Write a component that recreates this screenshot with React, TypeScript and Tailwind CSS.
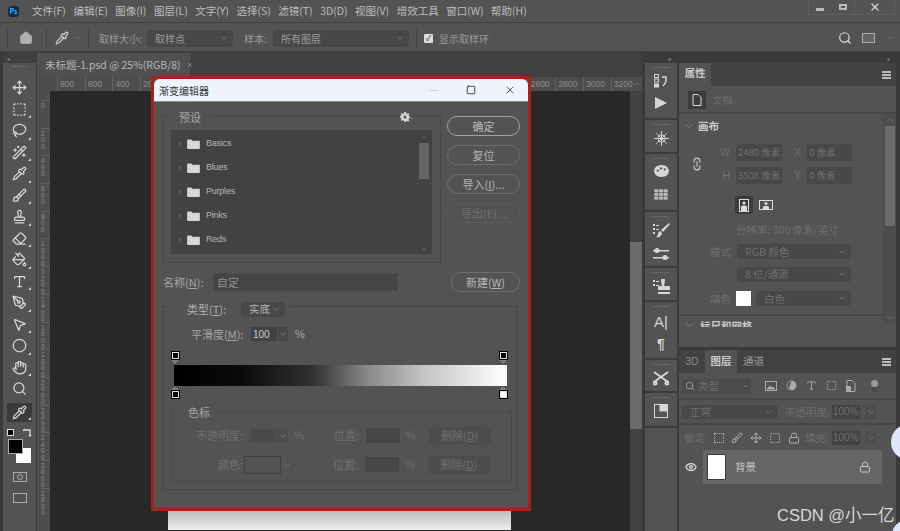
import {
  Brush,
  ChevronDown,
  ChevronRight,
  ChevronUp,
  Circle,
  Eraser,
  Eye,
  Hand,
  House,
  Lasso,
  Link2,
  Lock,
  MousePointer2,
  Move,
  PaintBucket,
  PenTool,
  Pipette,
  Search,
  Square,
  SquareDashed,
  Stamp,
  Type,
  WandSparkles,
  X,
} from 'lucide-react';
import type { ReactNode } from 'react';

const menus = ['文件(F)', '编辑(E)', '图像(I)', '图层(L)', '文字(Y)', '选择(S)', '滤镜(T)', '3D(D)', '视图(V)', '增效工具', '窗口(W)', '帮助(H)'];
// ticks behind the dialog have no visible label
const rulerTop = ['800', '600', '400', '200', '', '', '', '', '', '', '', '', '', '', '', '', '', '2600', '2800', '3000', '3200'];
const rulerLeft = ['0', '200', '400', '600', '800', '1000', '1200', '1400', '1600', '1800', '2000', '2200', '2400', '2600', '2800', '3000'];
const folders = ['Basics', 'Blues', 'Purples', 'Pinks', 'Reds'];

const tools = [Move, SquareDashed, Lasso, WandSparkles, Pipette, Brush, Stamp, Eraser, PaintBucket, Type, PenTool, MousePointer2, Circle, Hand, Search];

function Corner() {
  return <div className="absolute bottom-[2px] right-[1px] h-0 w-0 border-b-[3px] border-l-[3px] border-b-[#ccc] border-l-transparent" />;
}

function Caret({ className = '' }: { className?: string }) {
  return <ChevronDown className={'h-2.5 w-2.5 text-[#8a8a8a] ' + className} strokeWidth={1.5} />;
}

function Select({ className, text, tone = 'text-[#9a9a9a]' }: { className: string; text: string; tone?: string }) {
  return (
    <div className={'flex items-center justify-between rounded-sm bg-[#484848] pl-2 pr-1 ' + tone + ' ' + className}>
      <span>{text}</span>
      <Caret />
    </div>
  );
}

function DialogButton({ children, className }: { children: ReactNode; className: string }) {
  return <div className={'flex items-center justify-center rounded-full border text-[11px] ' + className}>{children}</div>;
}

function DockGroup({ children, className, gap = '' }: { children: ReactNode; className: string; gap?: string }) {
  return (
    <div className={'flex shrink-0 flex-col items-center border-b-2 border-[#3c3c3c] pt-1 text-[#d6d6d6] ' + className}>
      <div className="mx-auto mb-1 h-[3px] w-4 border-t border-dotted border-[#777]" />
      <div className={'flex flex-col items-center ' + gap}>{children}</div>
    </div>
  );
}

function Stop({ kind, fill }: { kind: 'top' | 'bottom'; fill: string }) {
  const box = <div className={'h-[7px] w-[7px] shrink-0 border border-[#e0e0e0] outline outline-1 outline-black ' + fill} />;
  const tip = kind === 'top'
    ? <div className="h-0 w-0 border-x-[4px] border-t-[4px] border-x-transparent border-t-[#7d7d7d]" />
    : <div className="h-0 w-0 border-x-[4px] border-b-[4px] border-x-transparent border-b-[#7d7d7d]" />;
  return (
    <div className="flex w-[8px] flex-col items-center gap-px">
      {kind === 'top' ? box : tip}
      {kind === 'top' ? tip : box}
    </div>
  );
}

function StopRow({ y, children }: { y: string; children: ReactNode }) {
  return <div className={'flex items-center text-[11px] text-[#6f6f6f] ' + y}>{children}</div>;
}

function GradientDialog() {
  return (
    <div className="absolute left-[151px] top-[76px] z-10 flex h-[435px] w-[380px] flex-col border-[3px] border-[#a6231b] bg-[#535353] text-[11px] text-[#ababab]">
      <div className="flex h-[23px] shrink-0 items-center justify-between rounded-t-md border-b border-[#8c8c8c] bg-[#eef3fb] pl-[5px] pr-[12px] text-[#333]">
        <span className="text-[10px]">渐变编辑器</span>
        <div className="flex items-center gap-[28px] text-[#222]">
          <div className="h-px w-2 bg-[#c8ccd2]" />
          <Square className="h-[10px] w-[10px]" strokeWidth={2} />
          <X className="h-3 w-3" strokeWidth={1.5} />
        </div>
      </div>

      <div className="relative flex pl-[8px] pt-[14px]">
        <div className="relative h-[147px] w-[279px] border border-[#484848] px-[8px] pt-[13px]">
          <span className="absolute -top-[8px] left-[8px] bg-[#535353] px-2 text-[#a6a6a6]">预设</span>
          <div className="absolute -top-[5px] right-[27px] flex items-center gap-px bg-[#535353] text-[#d0d0d0]">
            <svg viewBox="0 0 12 12" className="h-2.5 w-2.5" fill="currentColor" fillRule="evenodd">
              <path d="M5 0h2l.3 1.6 1.2.5 1.4-.9 1.3 1.3-.9 1.4.5 1.2L12 5v2l-1.2.9-.5 1.2.9 1.4-1.3 1.3-1.4-.9-1.2.5L7 12H5l-.3-1.6-1.2-.5-1.4.9-1.3-1.3.9-1.4-.5-1.2L0 7V5l1.2-.9.5-1.2-.9-1.4L2.1 1.200l1.4.9 1.2-.5zM6 4.200a1.800 1.800 0 1 0 0 3.600 1.800 1.800 0 0 0 0-3.600z" />
            </svg>
            <span className="text-[7px]">-</span>
          </div>
          <div className="flex h-[124px] bg-[#424242] pr-[3px]">
            <div className="flex flex-1 flex-col pl-[4px] pt-[2px]">
              {folders.map((name) => (
                <div key={name} className="flex h-[24px] items-center">
                  <ChevronRight className="h-2.5 w-2.5 text-[#8d8d8d]" strokeWidth={1.5} />
                  <svg viewBox="0 0 14 11" className="ml-[2px] h-[10px] w-[13px]" fill="#d6d6d6">
                    <path d="M0 1.500Q0 .5 1 .5h3.500l1 1.500H13q1 0 1 1v7q0 1-1 1H1q-1 0-1-1z" />
                  </svg>
                  <span className="ml-[6px] font-['Liberation_Sans'] text-[9px] tracking-tight text-[#b5b5b5]">{name}</span>
                </div>
              ))}
            </div>
            <div className="flex w-[11px] flex-col items-center">
              <ChevronUp className="h-[13px] w-2.5 text-[#777]" strokeWidth={1.5} />
              <div className="h-[36px] w-[10px] bg-[#666]" />
              <div className="flex-1" />
              <Caret />
            </div>
          </div>
        </div>
        <div className="ml-[6px] flex flex-col gap-[9px]">
          <DialogButton className="h-[20px] w-[73px] border-[#a5a5a5] text-[#bdbdbd]">确定</DialogButton>
          <DialogButton className="h-[20px] w-[73px] border-[#6e6e6e] text-[#b5b5b5]">复位</DialogButton>
          <DialogButton className="h-[20px] w-[73px] border-[#6e6e6e] text-[#b5b5b5]">导入(<u>I</u>)...</DialogButton>
          <DialogButton className="h-[20px] w-[73px] border-[#5c5c5c] text-[#6f6f6f]">导出(E)...</DialogButton>
        </div>
      </div>

      <div className="flex items-center pl-[9px] pt-[9px]">
        <span className="w-[50px] text-[#a6a6a6]">名称(<u>N</u>):</span>
        <div className="flex h-[18px] w-[185px] items-center border border-[#4a4a4a] bg-[#454545] pl-[3px] text-[#909090]">自定</div>
        <DialogButton className="ml-[53px] h-[20px] w-[69px] border-[#6e6e6e] text-[#b5b5b5]">新建(<u>W</u>)</DialogButton>
      </div>

      <div className="relative ml-[8px] mt-[14px] h-[184px] w-[356px] border border-[#484848]">
        <div className="absolute -top-[6px] left-[8px] flex items-center bg-[#535353] pl-[16px] pr-1">
          <span className="w-[54px] text-[#b0b0b0]">类型(<u>T</u>):</span>
          <Select className="h-[15px] w-[44px] text-[10.5px]" text="实底" tone="text-[#b5b5b5]" />
        </div>

        <div className="flex items-center pl-[28px] pt-[19px]">
          <span className="w-[60px] leading-[13px] text-[#a6a6a6]">平滑度(<u>M</u>):</span>
          <div className="flex h-[14px] w-[26px] items-center bg-[#424242] pl-[2px] font-['Liberation_Sans'] text-[10px] text-[#d0d0d0]">100</div>
          <div className="ml-px flex h-[14px] w-[10px] items-center justify-center bg-[#484848]"><Caret /></div>
          <span className="ml-[7px] font-['Liberation_Sans'] text-[#a6a6a6]">%</span>
        </div>

        <div className="flex justify-between pl-[8px] pr-[10px] pt-[9px]"><Stop kind="top" fill="bg-black" /><Stop kind="top" fill="bg-black" /></div>
        <div className="ml-[11px] mt-px h-[21px] w-[333px] bg-[linear-gradient(90deg,#000_0%,#0a0a0a_20%,#333_42%,#888_58%,#c4c4c4_75%,#fff_100%)]" />
        <div className="flex justify-between pl-[8px] pr-[10px]"><Stop kind="bottom" fill="bg-black" /><Stop kind="bottom" fill="bg-white" /></div>

        <div className="relative ml-[8px] mt-[13px] h-[71px] w-[341px] border border-[#4a4a4a]">
          <span className="absolute -top-[8px] left-[10px] bg-[#535353] px-[6px] text-[#a6a6a6]">色标</span>
          <StopRow y="pt-[15px]">
            <span className="w-[71px] text-right">不透明度:</span>
            <div className="ml-[7px] h-[13px] w-[26px] bg-[#4a4a4a]" />
            <div className="ml-px flex h-[13px] w-[11px] items-center justify-center bg-[#4d4d4d]"><Caret /></div>
            <span className="ml-[6px] font-['Liberation_Sans']">%</span>
            <span className="ml-[30px] w-[32px]">位置:</span>
            <div className="h-[15px] w-[34px] bg-[#474747]" />
            <span className="ml-[6px] font-['Liberation_Sans']">%</span>
            <div className="ml-[13px] flex h-[18px] w-[62px] items-center justify-center bg-[#4d4d4d]">删除(<u>D</u>)</div>
          </StopRow>
          <StopRow y="pt-[11px]">
            <span className="w-[71px] text-right">颜色:</span>
            <div className="ml-px h-[18px] w-[37px] border border-[#3e3e3e]" />
            <Caret className="ml-px" />
            <span className="ml-[41px] w-[32px]">位置:</span>
            <div className="h-[15px] w-[34px] bg-[#474747]" />
            <span className="ml-[6px] font-['Liberation_Sans']">%</span>
            <div className="ml-[13px] flex h-[18px] w-[62px] items-center justify-center bg-[#4d4d4d]">删除(<u>D</u>)</div>
          </StopRow>
        </div>
      </div>
    </div>
  );
}

function PropertyField({ label, value, width }: { label: string; value: string; width: string }) {
  return (
    <div className="flex items-center">
      <span className="w-[12px] text-right font-['Liberation_Sans'] text-[#6e6e6e]">{label}</span>
      <div className={'ml-[6px] flex h-[17px] items-center overflow-hidden whitespace-nowrap bg-[#484848] pl-[2px] text-[9.5px] text-[#6e6e6e] ' + width}>{value}</div>
    </div>
  );
}

function Menu() {
  return (
    <div className="flex flex-col justify-center gap-px">
      <div className="h-[2px] w-[9px] bg-[#bbb]" />
      <div className="h-[2px] w-[9px] bg-[#bbb]" />
      <div className="h-[2px] w-[9px] bg-[#bbb]" />
    </div>
  );
}

function PropertiesPanel() {
  return (
    <div className="flex h-[284px] shrink-0 flex-col bg-[#535353] text-[10.5px]">
      <div className="flex h-[23px] shrink-0 items-stretch justify-between bg-[#424242] pr-[5px]">
        <div className="flex w-[32px] items-center justify-center bg-[#535353] pb-[3px] font-bold text-[#c9c9c9]">属性</div>
        <Menu />
      </div>
      <div className="flex h-[28px] shrink-0 items-center border-b-2 border-[#474747] pl-[9px] pt-px">
        <div className="flex h-[18px] w-[18px] items-center justify-center bg-[#3c3c3c]">
          <svg viewBox="0 0 10 12" className="h-3 w-2.5" fill="none" stroke="#ddd"><path d="M1 .5h5l3 3v8H1z" /></svg>
        </div>
        <span className="ml-[6px] text-[#6e6e6e]">文档</span>
      </div>
      <div className="flex min-h-0 flex-1">
        <div className="flex-1 overflow-hidden">
          <div className="flex h-[24px] items-center pl-[4px] font-bold text-[#c9c9c9]">
            <ChevronDown className="h-3 w-3 text-[#8d8d8d]" strokeWidth={1.5} />
            <span className="ml-[3px]">画布</span>
          </div>
          <div className="flex items-center pl-[11px] pt-[6px]">
            <Link2 className="h-3.5 w-3.5 rotate-90 text-[#c9c9c9]" />
            <div className="ml-[14px] flex flex-col gap-[6px]">
              <div className="flex gap-[7px]">
                <PropertyField label="W" value="2480 像素" width="w-[46px]" />
                <PropertyField label="X" value="0 像素" width="w-[45px]" />
              </div>
              <div className="flex gap-[7px]">
                <PropertyField label="H" value="3508 像素" width="w-[46px]" />
                <PropertyField label="Y" value="0 像素" width="w-[45px]" />
              </div>
            </div>
          </div>
          <div className="flex items-center gap-[6px] pl-[56px] pt-[12px]">
            <div className="flex h-[18px] w-[18px] items-center justify-center bg-[#3c3c3c]">
              <svg viewBox="0 0 10 13" className="h-[13px] w-[10px]" fill="none" stroke="#ddd"><rect x=".5" y=".5" width="9" height="12" /><circle cx="5" cy="4" r="1.6" fill="#ddd" stroke="none" /><path d="M2 12V8q0-1.500 1.500-1.500h3Q8 6.500 8 8v4z" fill="#ddd" stroke="none" /></svg>
            </div>
            <svg viewBox="0 0 14 10" className="h-[10px] w-[14px]" fill="none" stroke="#ddd"><rect x=".5" y=".5" width="13" height="9" /><circle cx="7" cy="3.500" r="1.500" fill="#ddd" stroke="none" /><path d="M4 9V7.500Q4 6 5.500 6h3Q10 6 10 7.500V9z" fill="#ddd" stroke="none" /></svg>
          </div>
          <div className="pl-[57px] pt-[8px] text-[#6e6e6e]">分辨率: 300 像素/英寸</div>
          <div className="flex items-center pl-[31px] pt-[6px] text-[#6e6e6e]">
            <span className="w-[27px]">模式</span>
            <Select className="h-[15px] w-[114px]" text="RGB 颜色" tone="text-[#6e6e6e]" />
          </div>
          <div className="pl-[58px] pt-[7px]">
            <Select className="h-[15px] w-[114px]" text="8 位/通道" tone="text-[#6e6e6e]" />
          </div>
          <div className="flex items-center pl-[31px] pt-[9px] text-[#6e6e6e]">
            <span className="w-[26px]">填色</span>
            <div className="h-[15px] w-[15px] bg-white" />
            <Select className="ml-[5px] h-[15px] w-[95px]" text="白色" tone="text-[#6e6e6e]" />
          </div>
          <div className="mt-[8px] flex h-[13px] items-start overflow-hidden border-t-2 border-[#474747] pl-[4px] pt-[3px] font-bold text-[#c9c9c9]">
            <ChevronDown className="h-3 w-3 text-[#8d8d8d]" strokeWidth={1.5} />
            <span className="ml-[5px] leading-[14px]">标尺和网格</span>
          </div>
        </div>
        <div className="flex h-[209px] w-[13px] flex-col items-center bg-[#4d4d4d]">
          <ChevronUp className="h-3 w-3 text-[#777]" strokeWidth={1.5} />
          <div className="h-[100px] w-[10px] bg-[#6b6b6b]" />
          <div className="flex-1" />
          <Caret />
        </div>
      </div>
    </div>
  );
}

function LayersPanel() {
  return (
    <div className="flex flex-1 flex-col bg-[#535353] text-[10.5px] text-[#6e6e6e]">
      <div className="flex h-[23px] shrink-0 items-stretch bg-[#424242] pr-[5px]">
        <div className="flex w-[26px] items-center justify-center font-['Liberation_Sans'] text-[#888]">3D</div>
        <div className="flex w-[32px] items-center justify-center bg-[#535353] pb-px font-bold text-[#c9c9c9]">图层</div>
        <div className="flex w-[33px] items-center justify-center pb-px text-[#9a9a9a]">通道</div>
        <div className="flex-1" />
        <Menu />
      </div>
      <div className="flex h-[27px] shrink-0 items-center border-b-2 border-[#474747] pl-[3px] text-[#aaa]">
        <div className="flex h-[14px] w-[69px] items-center bg-[#4b4b4b] pl-[3px] text-[#6e6e6e]">
          <Search className="h-2.5 w-2.5 text-[#aaa]" />
          <span className="ml-[3px] flex-1">类型</span>
          <Caret />
        </div>
        <div className="ml-[14px] flex items-center gap-[9px]">
          <svg viewBox="0 0 12 10" className="h-[10px] w-[12px]" fill="none" stroke="currentColor"><rect x=".5" y=".5" width="11" height="9" /><path d="M2 8l3-3 2 2 1-1 2 2z" fill="currentColor" /></svg>
          <svg viewBox="0 0 12 12" className="h-[11px] w-[11px]"><circle cx="6" cy="6" r="5" fill="none" stroke="currentColor" /><path d="M6 1a5 5 0 0 1 0 10L3 9z" fill="currentColor" /></svg>
          <Type className="h-[11px] w-[11px]" />
          <SquareDashed className="h-[11px] w-[11px]" />
          <svg viewBox="0 0 10 12" className="h-[12px] w-[10px]" fill="currentColor"><path d="M1 .5h5l3 3v8H1z" fill="none" stroke="currentColor" /><rect x="0" y="6" width="5" height="6" /></svg>
        </div>
        <div className="ml-[15px] flex flex-col items-center">
          <div className="h-[7px] w-[7px] rounded-full bg-[#999]" />
          <div className="h-[5px] w-[5px] rounded-full bg-[#474747]" />
        </div>
      </div>
      <div className="flex h-[25px] shrink-0 items-center border-b-2 border-[#474747] pl-[3px]">
        <Select className="h-[14px] w-[96px]" text="正常" tone="text-[#6e6e6e]" />
        <span className="ml-[7px] w-[47px]">不透明度:</span>
        <div className="flex h-[14px] w-[28px] items-center bg-[#434343] pl-px font-['Liberation_Sans'] text-[10px]">100%</div>
        <div className="ml-[5px] flex h-[14px] w-[11px] items-center justify-center bg-[#4d4d4d]"><Caret /></div>
      </div>
      <div className="flex h-[25px] shrink-0 items-center pl-[5px]">
        <span className="w-[30px]">锁定:</span>
        <div className="flex items-center gap-[7px] text-[#b0b0b0]">
          <div className="h-[10px] w-[10px] border border-dotted border-[#b0b0b0]" />
          <Brush className="h-3 w-3" />
          <Move className="h-3 w-3" />
          <SquareDashed className="h-3 w-3" />
          <Lock className="h-3 w-3" />
        </div>
        <span className="ml-[5px] w-[27px]">填充:</span>
        <div className="flex h-[14px] w-[28px] items-center bg-[#434343] pl-px font-['Liberation_Sans'] text-[10px]">100%</div>
        <div className="ml-[5px] flex h-[14px] w-[11px] items-center justify-center bg-[#4d4d4d]"><Caret /></div>
      </div>
      <div className="flex h-[34px] shrink-0 items-center pl-[6px]">
        <Eye className="h-3 w-3 text-[#ddd]" strokeWidth={2.5} />
        <div className="ml-[6px] flex h-full w-[179px] items-center bg-[#666] pl-[4px] text-[#c9c9c9]">
          <div className="h-[26px] w-[19px] border border-[#3c3c3c] bg-white" />
          <span className="ml-[9px] flex-1">背景</span>
          <Lock className="mr-[11px] h-3 w-3 text-[#c9c9c9]" />
        </div>
      </div>
    </div>
  );
}

function Dock() {
  return (
    <div className="flex w-[32px] shrink-0 flex-col bg-[#535353]">
      <DockGroup className="h-[57px]" gap="gap-[9px]">
        <svg viewBox="0 0 14 14" className="h-[14px] w-[14px]" fill="none" stroke="currentColor"><rect x=".5" y=".5" width="4" height="3" /><rect x=".5" y="5" width="4" height="3" /><rect x=".5" y="10" width="4" height="3" fill="currentColor" /><path d="M8 3h4q1 5-3 9" strokeWidth="1.5" /></svg>
        <svg viewBox="0 0 12 12" className="h-[12px] w-[12px]" fill="currentColor"><path d="M0 0l12 6-12 6z" /></svg>
      </DockGroup>
      <DockGroup className="h-[34px]">
        <svg viewBox="0 0 16 16" className="h-[15px] w-[15px]" fill="none" stroke="currentColor"><circle cx="8" cy="8" r="4" /><circle cx="8" cy="8" r="1.5" fill="currentColor" /><path d="M8 0v16M0 8h16M2.500 2.500l11 11M13.500 2.500l-11 11" /></svg>
      </DockGroup>
      <DockGroup className="h-[58px]" gap="gap-[12px]">
        <svg viewBox="0 0 16 13" className="h-[12px] w-[15px]" fill="currentColor" fillRule="evenodd"><path d="M8 0c5 0 8 3 8 6.500S13 13 8 13 0 10 0 6.500 3 0 8 0zM4 5a1.200 1.200 0 1 0 0 2.400A1.200 1.200 0 0 0 4 5zm3.500-2.500a1.200 1.200 0 1 0 0 2.400 1.200 1.200 0 0 0 0-2.400zm4 1a1.200 1.200 0 1 0 0 2.400 1.200 1.200 0 0 0 0-2.400z" /></svg>
        <svg viewBox="0 0 14 11" className="h-[11px] w-[14px]" fill="#bbb" stroke="#333" strokeWidth=".5"><path d="M0 0h14v11H0zM0 3.600h14M0 7.300h14M4.600 0v11M9.300 0v11" /></svg>
      </DockGroup>
      <DockGroup className="h-[56px]" gap="gap-[10px]">
        <svg viewBox="0 0 17 15" className="h-[15px] w-[17px]" fill="currentColor"><path d="M0 1h2v2H0zM0 5h2v2H0zM0 9h2v2H0zM3 2h3v1H3zM3 6h3v1H3z" /><path d="M16 0l1 1-7 8-2-2zM7 8l2 2q-1 5-6 4 2-1 2-3t2-3z" /></svg>
        <svg viewBox="0 0 16 12" className="h-[12px] w-[16px]" fill="currentColor"><rect y="2" width="16" height="1.5" /><circle cx="4" cy="2.500" r="2.500" /><rect y="9" width="16" height="1.5" /><circle cx="12" cy="9.500" r="2.500" /></svg>
      </DockGroup>
      <DockGroup className="h-[34px]">
        <svg viewBox="0 0 17 16" className="h-[16px] w-[17px]" fill="currentColor"><path d="M0 1h2v2H0zM0 5h2v2H0zM3 2h3v1H3zM3 6h3v1H3z" /><path d="M8 0h4v2l-1 5h5q1 0 1 1v3H5V8q0-1 1-1h3L8 2zM5 13h12v2H5z" /></svg>
      </DockGroup>
      <DockGroup className="h-[58px]" gap="gap-[5px]">
        <span className="font-['Liberation_Sans'] text-[15px] leading-[18px]">A|</span>
        <span className="font-['Liberation_Sans'] text-[14px] font-bold leading-[16px]">¶</span>
      </DockGroup>
      <DockGroup className="h-[33px]">
        <svg viewBox="0 0 16 15" className="h-[15px] w-[16px]" fill="none" stroke="currentColor" strokeWidth="2"><path d="M1 1l14 10M15 1L1 11" /><circle cx="2" cy="12" r="1.500" /><circle cx="14" cy="12" r="1.500" /></svg>
      </DockGroup>
      <DockGroup className="h-[35px]">
        <svg viewBox="0 0 14 14" className="h-[14px] w-[14px]" fill="none" stroke="currentColor"><rect x=".5" y=".5" width="13" height="13" /><rect x="6" y="1" width="7" height="6" fill="currentColor" /></svg>
      </DockGroup>
    </div>
  );
}

export default function App() {
  return (
    <div className="relative h-[531px] w-[900px] overflow-hidden bg-[#535353] font-['Noto_Sans_CJK_SC','Liberation_Sans',sans-serif] text-[#bdbdbd]">
      <div className="flex h-[23px] items-center border-b border-[#3f3f3f] pl-[8px] text-[10.5px]">
        <div className="flex h-[11px] w-[11px] items-center justify-center rounded-sm bg-[#0b2c4f] text-[7px] font-bold text-[#4fb0f5]">Ps</div>
        <div className="ml-[13px] flex gap-[7.5px]">
          {menus.map((item) => <span key={item}>{item}</span>)}
        </div>
        <div className="ml-auto mr-[5px] flex h-[15px] items-center self-start border-x border-b border-[#5f5f5f] text-[#c9c9c9]">
          <div className="flex h-full w-[22px] items-center justify-center"><div className="mt-1 h-[3px] w-2 bg-[#bbb]" /></div>
          <div className="flex h-full w-[23px] items-center justify-center"><div className="h-[6px] w-[8px] border-2 border-[#bbb]" /></div>
          <div className="flex h-full w-[40px] items-center justify-center border-l border-[#5f5f5f]"><X className="h-3 w-3" strokeWidth={3} /></div>
        </div>
      </div>

      <div className="flex h-[30px] items-center border-b-2 border-[#3f3f3f] pt-[2px] text-[10px] text-[#9a9a9a]">
        <div className="ml-[7px] h-[20px] w-px bg-[#444]" />
        <House className="ml-[11px] h-3.5 w-3.5 text-[#b0b0b0]" fill="currentColor" />
        <div className="ml-[13px] h-[20px] w-px bg-[#444]" />
        <Pipette className="ml-[8px] h-3.5 w-3.5 text-[#ccc]" />
        <Caret className="ml-[4px]" />
        <div className="ml-[5px] h-[20px] w-px bg-[#444]" />
        <span className="ml-[10px] w-[48px]">取样大小:</span>
        <Select className="h-[17px] w-[86px]" text="取样点" />
        <span className="ml-[11px] w-[29px]">样本:</span>
        <Select className="h-[17px] w-[136px]" text="所有图层" />
        <div className="ml-[7px] h-[20px] w-px bg-[#444]" />
        <div className="ml-[7px] flex h-[9px] w-[9px] items-center justify-center rounded-[1px] bg-[#ddd] text-[8px] leading-none text-[#222]">✓</div>
        <span className="ml-[6px]">显示取样环</span>
        <div className="ml-auto mr-[5px] flex items-center gap-[10px]">
          <Search className="h-3.5 w-3.5 text-[#ddd]" />
          <div className="h-[10px] w-[13px] border border-[#aaa] bg-[#666]" />
          <Caret />
        </div>
      </div>

      <div className="flex h-[478px] bg-[#3a3a3a]">
        <div className="ml-[3px] flex w-[33px] shrink-0 flex-col items-center bg-[#535353]">
          <div className="flex h-[10px] w-full items-center bg-[#3f3f3f] pl-[4px] text-[7px] leading-none text-[#aaa]">»</div>
          <div className="mt-[3px] h-[3px] w-4 border-t border-dotted border-[#777]" />
          <div className="flex flex-col items-center pt-[8px] text-[#d8d8d8]">
            {tools.map((Icon, i) => (
              <div key={i} className="relative flex h-[21.5px] w-[25px] items-center justify-center">
                <Icon className="h-[15px] w-[15px]" />
                {i !== 0 && i !== 14 && <Corner />}
              </div>
            ))}
            <div className="relative mt-[3px] flex h-[19px] w-[25px] items-center justify-center bg-[#3a3a3a]">
              <Pipette className="h-[15px] w-[15px]" />
              <Corner />
            </div>
          </div>
          <div className="mt-[6px] flex w-[25px] items-center justify-between">
            <div className="h-[7px] w-[7px] border border-[#ddd] bg-black" />
            <svg viewBox="0 0 9 9" className="h-[9px] w-[9px]" fill="none" stroke="#ddd" strokeWidth="1.3"><path d="M1 2h6v6M0 3l1-1 1-1M6 7l1 1 1-1" /></svg>
          </div>
          <div className="mt-[2px] w-[24px]">
            <div className="relative z-[1] h-[15px] w-[15px] border border-[#aaa] bg-black" />
            <div className="-mt-[6px] ml-[8px] h-[15px] w-[15px] bg-white" />
          </div>
          <div className="mt-[9px] flex h-[10px] w-[14px] items-center justify-center border border-[#aaa]">
            <div className="h-[6px] w-[6px] rounded-full border border-[#aaa]" />
          </div>
          <div className="mt-[11px] h-[10px] w-[14px] border border-[#aaa]" />
        </div>
        <div className="w-px shrink-0 bg-[#3a3a3a]" />

        <div className="relative flex w-[605px] shrink-0 flex-col">
          <div className="flex h-[24px] shrink-0 bg-[#404040]">
            <div className="flex w-[153px] items-center bg-[#505050] pl-[8px] text-[10.5px] text-[#b5b5b5]">
              <span className="whitespace-nowrap">未标题-1.psd @ 25%(RGB/8)</span>
              <X className="ml-[5px] h-2 w-2 shrink-0 text-[#999]" />
            </div>
          </div>
          <div className="flex h-[14px] shrink-0 items-center overflow-hidden bg-[#4d4d4d] pl-[20px] font-['Liberation_Sans'] text-[8.5px] text-[#8e8e8e]">
            {rulerTop.map((tick, i) => (
              <span key={i} className="h-[14px] w-[27.7px] shrink-0 border-l border-[#626262] pl-[2px] leading-[14px]">{tick}</span>
            ))}
          </div>
          <ChevronUp className="absolute right-0 top-[26px] h-2.5 w-2.5 text-[#8a8a8a]" strokeWidth={1.5} />
          <div className="flex min-h-0 flex-1">
            <div className="flex w-[13px] shrink-0 flex-col overflow-hidden bg-[#4d4d4d] pl-[4px] pt-[9px] font-['Liberation_Sans'] text-[6.5px] leading-[6.5px] text-[#8e8e8e]">
              {rulerLeft.slice(0, 15).map((tick, i) => (
                <div key={i} className="h-[27.7px] shrink-0 border-t border-[#626262] pt-[2px]">
                  {tick.split('').map((d, j) => <div key={j}>{d}</div>)}
                </div>
              ))}
            </div>
            <div className="relative flex-1 overflow-hidden bg-[#282828]">
              <div className="absolute left-[118px] top-[398px] h-[41px] w-[343px] bg-gradient-to-b from-[#888888] to-[#eeeeee]" />
            </div>
            <div className="flex w-[12px] shrink-0 flex-col bg-[#424242] pt-[151px]">
              <div className="h-[187px] w-full bg-[#6b6b6b]" />
            </div>
          </div>
        </div>

        <div className="ml-[3px] flex min-w-0 flex-1 flex-col">
          <div className="flex h-[10px] shrink-0 items-center justify-between px-[8px] text-[7px] leading-none text-[#aaa]">
            <span className="ml-[15px]">«</span>
            <span className="mr-[2px]">»</span>
          </div>
          <div className="flex min-h-0 flex-1">
            <Dock />
            <div className="ml-[2px] flex w-[217px] shrink-0 flex-col gap-[3px]">
              <PropertiesPanel />
              <LayersPanel />
            </div>
          </div>
        </div>
      </div>

      <GradientDialog />

      <div className="absolute left-[891px] top-[424px] h-[36px] w-[36px] rounded-full bg-[#dfe7ff]" />
      <div className="absolute left-[892px] top-[520px] h-[30px] w-[30px] rounded-full bg-[#dfe7ff]" />
      <span className="absolute left-[777px] top-[504px] font-['Liberation_Sans','Noto_Sans_CJK_SC',sans-serif] text-[16.5px] leading-[22px] text-[#d8d8d8]">CSDN @小一亿</span>
    </div>
  );
}
